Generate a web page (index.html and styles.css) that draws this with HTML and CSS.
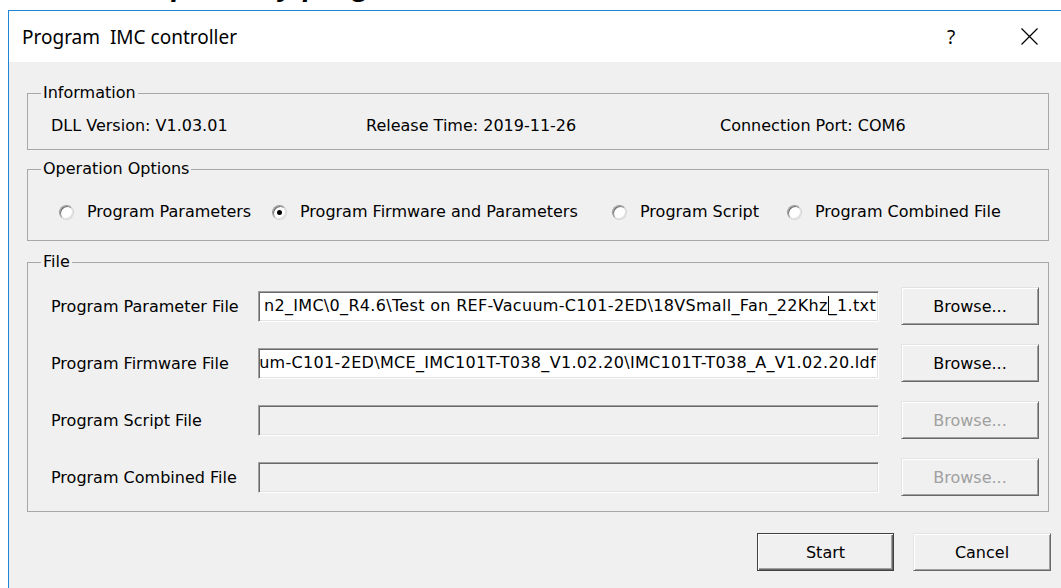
FILE: index.html
```html
<!DOCTYPE html>
<html lang="en">
<head>
<meta charset="utf-8">
<title>Program IMC controller</title>
<link rel="stylesheet" href="styles.css">
</head>
<body>
  <div class="doc-strip"><span class="doc-heading">Update by program</span></div>

  <div class="window">
    <div class="titlebar">
      <span class="title">Program&nbsp; IMC controller</span>
      <span class="tb-btn tb-help">?</span>
      <span class="tb-btn tb-close">
        <svg width="17" height="17" viewBox="0 0 17 17"><path d="M0.5 0.5 L16.5 16.5 M16.5 0.5 L0.5 16.5" stroke="#000" stroke-width="1.2" fill="none"/></svg>
      </span>
    </div>

    <div class="dialog">
      <fieldset class="group group-info">
        <legend>Information</legend>
        <div class="info-row">
          <span>DLL Version: V1.03.01</span>
          <span>Release Time: 2019-11-26</span>
          <span>Connection Port: COM6</span>
        </div>
      </fieldset>

      <fieldset class="group group-options">
        <legend>Operation Options</legend>
        <div class="radio-row">
          <label class="radio-item"><span class="radio"></span>Program Parameters</label>
          <label class="radio-item"><span class="radio checked"></span>Program Firmware and Parameters</label>
          <label class="radio-item"><span class="radio"></span>Program Script</label>
          <label class="radio-item"><span class="radio"></span>Program Combined File</label>
        </div>
      </fieldset>

      <fieldset class="group group-file">
        <legend>File</legend>
        <div class="file-rows">
          <div class="file-row">
            <span class="file-label">Program Parameter File</span>
            <div class="edit"><span class="edit-text">n2_IMC\0_R4.6\Test on REF-Vacuum-C101-2ED\18VSmall_Fan_22Khz<span class="caret"></span>_1.txt</span></div>
            <span class="btn">Browse...</span>
          </div>
          <div class="file-row">
            <span class="file-label">Program Firmware File</span>
            <div class="edit"><span class="edit-text">um-C101-2ED\MCE_IMC101T-T038_V1.02.20\IMC101T-T038_A_V1.02.20.ldf</span></div>
            <span class="btn">Browse...</span>
          </div>
          <div class="file-row">
            <span class="file-label">Program Script File</span>
            <div class="edit disabled"></div>
            <span class="btn disabled">Browse...</span>
          </div>
          <div class="file-row">
            <span class="file-label">Program Combined File</span>
            <div class="edit disabled"></div>
            <span class="btn disabled">Browse...</span>
          </div>
        </div>
      </fieldset>

      <div class="actions">
        <span class="btn btn-default">Start</span>
        <span class="btn">Cancel</span>
      </div>
    </div>
  </div>
</body>
</html>
```

FILE: styles.css
```css
html, body {
  margin: 0;
  padding: 0;
  overflow: hidden;
  background: #ffffff;
}

body {
  width: 1061px;
  height: 588px;
  font-family: "DejaVu Sans", "Liberation Sans", sans-serif;
  font-size: 16px;
  color: #000;
}

/* strip of the document page behind the dialog: only the lower
   edge of its heading shows above the window */
.doc-strip {
  height: 10px;
  overflow: hidden;
  position: relative;
}

.doc-heading {
  position: absolute;
  left: 150px;
  top: -29px;
  font-family: "Liberation Sans", sans-serif;
  font-weight: bold;
  font-style: italic;
  font-size: 30px;
  line-height: 30px;
  white-space: nowrap;
  color: #000;
}

/* dialog window */
.window {
  margin-left: 8px;
  width: 1070px;
  border-left: 1px solid #1c85d8;
  border-top: 1px solid #1c85d8;
  background: #f0f0f0;
}

.titlebar {
  height: 51px;
  background: #ffffff;
  display: flex;
  align-items: center;
  padding: 0 30px 0 13px;
}

.title {
  flex: 1;
  font-family: "Noto Sans", "Open Sans", sans-serif;
  font-size: 19px;
  white-space: nowrap;
}

.tb-btn {
  width: 40px;
  display: flex;
  justify-content: center;
  align-items: center;
}

.tb-help {
  font-family: "Noto Sans", "Open Sans", sans-serif;
  font-size: 19px;
  margin-right: 38px;
}

.dialog {
  padding: 0 0 40px 18px;
}

/* group boxes */
.group {
  box-sizing: border-box;
  width: 1022px;
  margin: 0;
  padding: 0;
  border: 1px solid #a8a8a8;
  min-inline-size: 0;
}

.group legend {
  margin-left: 13px;
  padding: 0 2px;
  line-height: 18px;
  font-size: 16px;
}

.group-info {
  margin-top: 22px;
}

.info-row {
  display: grid;
  grid-template-columns: 315px 354px 1fr;
  padding: 14px 0 13px 23px;
  line-height: 20px;
  white-space: nowrap;
}

.group-options {
  margin-top: 10px;
}

.radio-row {
  display: grid;
  grid-template-columns: 213px 340px 175px 1fr;
  padding: 24px 0 18px 31px;
  line-height: 20px;
}

.radio-item {
  display: flex;
  align-items: center;
  gap: 13px;
  white-space: nowrap;
}

/* classic sunken radio circle */
.radio {
  position: relative;
  display: block;
  box-sizing: border-box;
  width: 15px;
  height: 15px;
  min-width: 15px;
  border-radius: 50%;
  border: 1px solid;
  border-color: #9a9a9a #d4d4d4 #d4d4d4 #9a9a9a;
  background: #ffffff;
  box-shadow: inset 1px 1px 0 #6e6e6e, inset -1px -1px 0 #e3e3e3;
  flex: none;
}

.radio.checked::after {
  content: "";
  position: absolute;
  left: 4px;
  top: 4px;
  width: 5px;
  height: 5px;
  border-radius: 50%;
  background: #000;
}

.group-file {
  margin-top: 12px;
}

.file-rows {
  display: flex;
  flex-direction: column;
  gap: 19px;
  padding: 16px 8px 15px 23px;
}

.file-row {
  display: flex;
  align-items: center;
  height: 38px;
}

.file-label {
  width: 207px;
  white-space: nowrap;
}

/* classic sunken edit field */
.edit {
  box-sizing: border-box;
  width: 621px;
  height: 31px;
  margin-right: 22px;
  border: 1px solid;
  border-color: #a0a0a0 #ffffff #ffffff #a0a0a0;
  box-shadow: inset 1px 1px 0 #696969, inset -1px -1px 0 #e3e3e3;
  background: #ffffff;
  display: flex;
  justify-content: flex-end;
  align-items: center;
  overflow: hidden;
  padding: 0 2px;
}

.edit.disabled {
  background: #f0f0f0;
}

.edit-text {
  white-space: nowrap;
  line-height: 20px;
  letter-spacing: 0.32px;
}

.caret {
  display: inline-block;
  width: 0;
  height: 19px;
  border-left: 1px solid #000;
  vertical-align: -4px;
}

/* classic raised push button */
.btn {
  box-sizing: border-box;
  width: 138px;
  height: 38px;
  display: flex;
  justify-content: center;
  align-items: center;
  border: 1px solid;
  border-color: #e3e3e3 #696969 #696969 #e3e3e3;
  box-shadow: inset 1px 1px 0 #ffffff, inset -1px -1px 0 #a0a0a0;
  background: #f0f0f0;
  white-space: nowrap;
}

.btn.disabled {
  color: #a0a0a0;
}

.actions {
  width: 1024px;
  margin-top: 21px;
  display: flex;
  justify-content: flex-end;
  gap: 19px;
}

.btn-default {
  width: 137px;
  border-color: #404040;
  box-shadow: inset 1px 1px 0 #ffffff, inset -1px -1px 0 #696969, inset -2px -2px 0 #a0a0a0;
}
```
